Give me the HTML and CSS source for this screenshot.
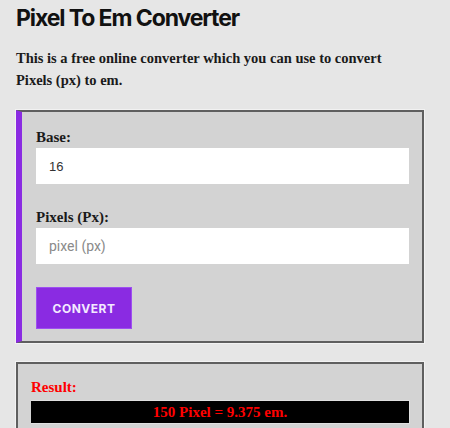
FILE: index.html
```html
<!DOCTYPE html>
<html>
<head>
<meta charset="utf-8">
<link rel="stylesheet" href="styles.css">
</head>
<body>
<h1 class="title">Pixel To Em Converter</h1>
<p class="intro">This is a free online converter which you can use to convert Pixels (px) to em.</p>
<div class="card card-form">
  <label class="label" for="base">Base:</label>
  <input class="field" id="base" type="text" value="16">
  <label class="label label-gap" for="px">Pixels (Px):</label>
  <input class="field" id="px" type="text" placeholder="pixel (px)">
  <button class="btn" type="button">CONVERT</button>
</div>
<div class="card card-result">
  <div class="result-label">Result:</div>
  <div class="result-bar">150 Pixel = 9.375 em.</div>
</div>
</body>
</html>
```
FILE: styles.css
```css
html, body {
  margin: 0;
  background: #e6e6e6;
}
body {
  padding: 0 26px 0 16px;
  font-family: "Liberation Serif", serif;
  color: #1a1a1a;
}
.title {
  font-family: Inter, "Liberation Sans", sans-serif;
  font-weight: 700;
  font-size: 23px;
  line-height: 30px;
  letter-spacing: -1.1px;
  color: #111;
  margin: 3px 0 0;
}
.intro {
  max-width: 380px;
  font-size: 14.5px;
  font-weight: 700;
  line-height: 22px;
  margin: 14px 0 0;
}
.card {
  background: #d3d3d3;
  border: 2px solid #5f5f5f;
  box-shadow: 0 0 0 1px #f2f2f2;
}
.card-form {
  margin-top: 19px;
  border-left: 6px solid #8a2be2;
  padding: 14px 13px 12px 14px;
  display: flex;
  flex-direction: column;
  align-items: flex-start;
}
.label {
  font-size: 15px;
  font-weight: 700;
  line-height: 22px;
  color: #1a1a1a;
}
.label-gap {
  margin-top: 22px;
}
.field {
  box-sizing: border-box;
  width: 100%;
  height: 36px;
  border: none;
  background: #fff;
  padding: 0 13px;
  font-family: Roboto, "Liberation Sans", sans-serif;
  font-size: 14px;
  color: #333;
  outline: none;
}
#base {
  font-family: "Liberation Sans", sans-serif;
  font-size: 13px;
}
.field::placeholder {
  color: #8a8a8a;
}
.btn {
  margin-top: 23px;
  width: 96px;
  height: 42px;
  background: #8a2be2;
  border: 1px solid #9d4ff0;
  color: #f3eaff;
  font-family: Inter, "Liberation Sans", sans-serif;
  font-weight: 700;
  font-size: 12px;
  letter-spacing: 0.5px;
  padding: 0;
}
.card-result {
  margin-top: 19px;
  padding: 12px 12px 10px 13px;
}
.result-label {
  color: #f00;
  font-size: 15px;
  font-weight: 700;
  line-height: 22px;
}
.result-bar {
  margin-top: 2px;
  background: #000;
  border: 1px solid #e0e0e0;
  border-left: none;
  color: #f00;
  font-size: 15px;
  font-weight: 700;
  line-height: 22px;
  text-align: center;
}
```
